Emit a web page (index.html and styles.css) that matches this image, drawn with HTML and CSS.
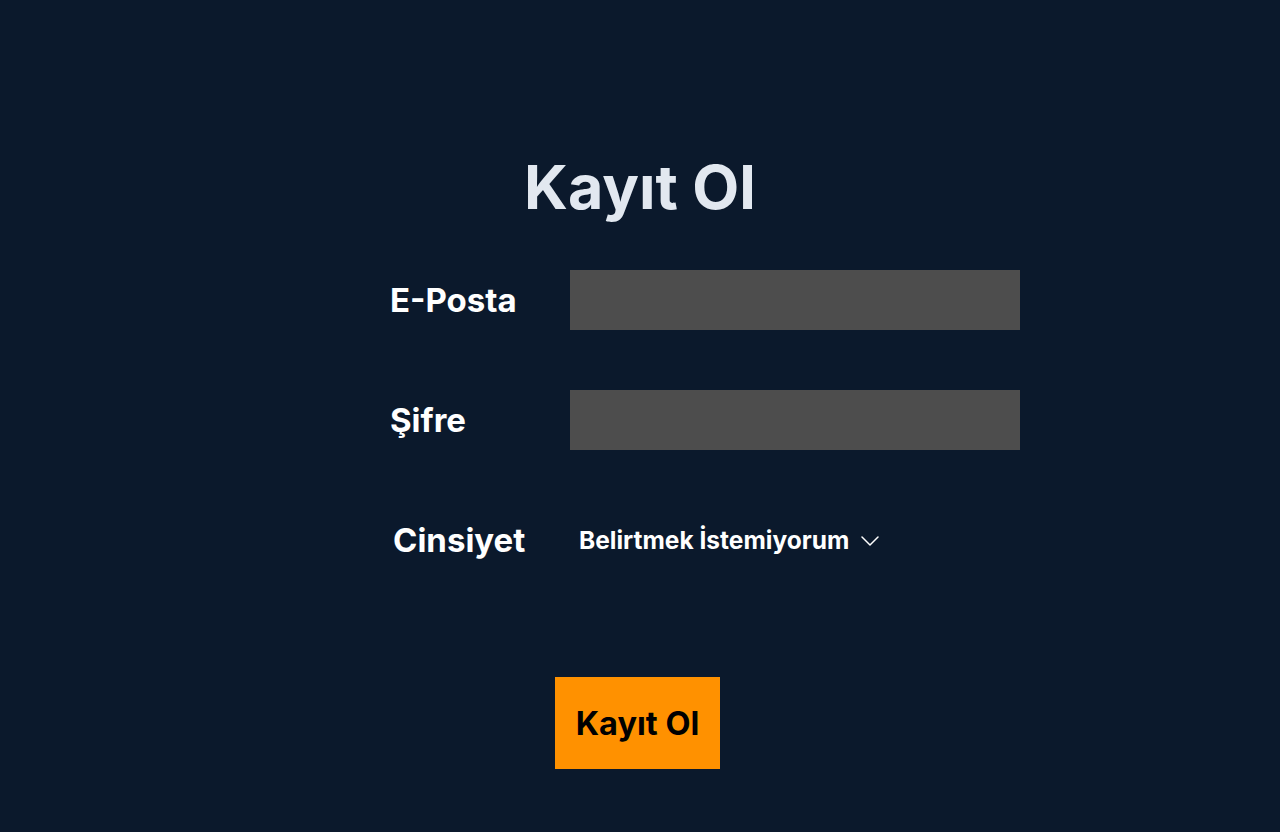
FILE: index.html
```html
<!DOCTYPE html>
<html lang="tr">
<head>
<meta charset="utf-8">
<link rel="stylesheet" href="styles.css">
</head>
<body>
<main class="page">
  <h1 class="title">Kayıt Ol</h1>
  <form class="form">
    <div class="row">
      <label class="label">E-Posta</label>
      <div class="input"></div>
    </div>
    <div class="row">
      <label class="label">Şifre</label>
      <div class="input"></div>
    </div>
    <div class="row row-select">
      <label class="label label-select">Cinsiyet</label>
      <div class="select">
        <span>Belirtmek İstemiyorum</span>
        <svg class="chev" width="18" height="10" viewBox="0 0 18 10" fill="none"><path d="M1 1l8 8 8-8" stroke="#ffffff" stroke-width="1.5" stroke-linecap="round" stroke-linejoin="round"/></svg>
      </div>
    </div>
  </form>
  <div class="actions">
    <button class="btn" type="button">Kayıt Ol</button>
  </div>
</main>
</body>
</html>
```
FILE: styles.css
```css
html, body {
  margin: 0;
  padding: 0;
  background: #0b192c;
  font-family: Inter, "Noto Sans", sans-serif;
}
.page {
  width: 1280px;
  height: 832px;
  display: flex;
  flex-direction: column;
  align-items: center;
}
.title {
  margin: 150px 0 0;
  font-size: 61px;
  font-weight: 700;
  line-height: 74px;
  color: #e2e8f0;
}
.form {
  margin-top: 46px;
  margin-left: 130px;
  display: flex;
  flex-direction: column;
  gap: 60px;
}
.row {
  display: flex;
  align-items: center;
}
.label {
  width: 180px;
  color: #ffffff;
  font-size: 33px;
  font-weight: 700;
}
.input {
  width: 450px;
  height: 60px;
  background: #4d4d4d;
}
.row-select {
  height: 60px;
}
.label-select {
  padding-left: 3px;
  width: 177px;
}
.select {
  display: flex;
  align-items: center;
  gap: 12px;
  padding-left: 9px;
  color: #ffffff;
  font-size: 24.5px;
  font-weight: 700;
}
.chev {
  margin-top: 2px;
}
.actions {
  margin-top: 107px;
  margin-right: 5px;
}
.btn {
  border: none;
  background: #ff9100;
  color: #000000;
  font-family: Inter, sans-serif;
  font-size: 32.5px;
  font-weight: 700;
  width: 165px;
  height: 92px;
  padding: 0;
}
```
